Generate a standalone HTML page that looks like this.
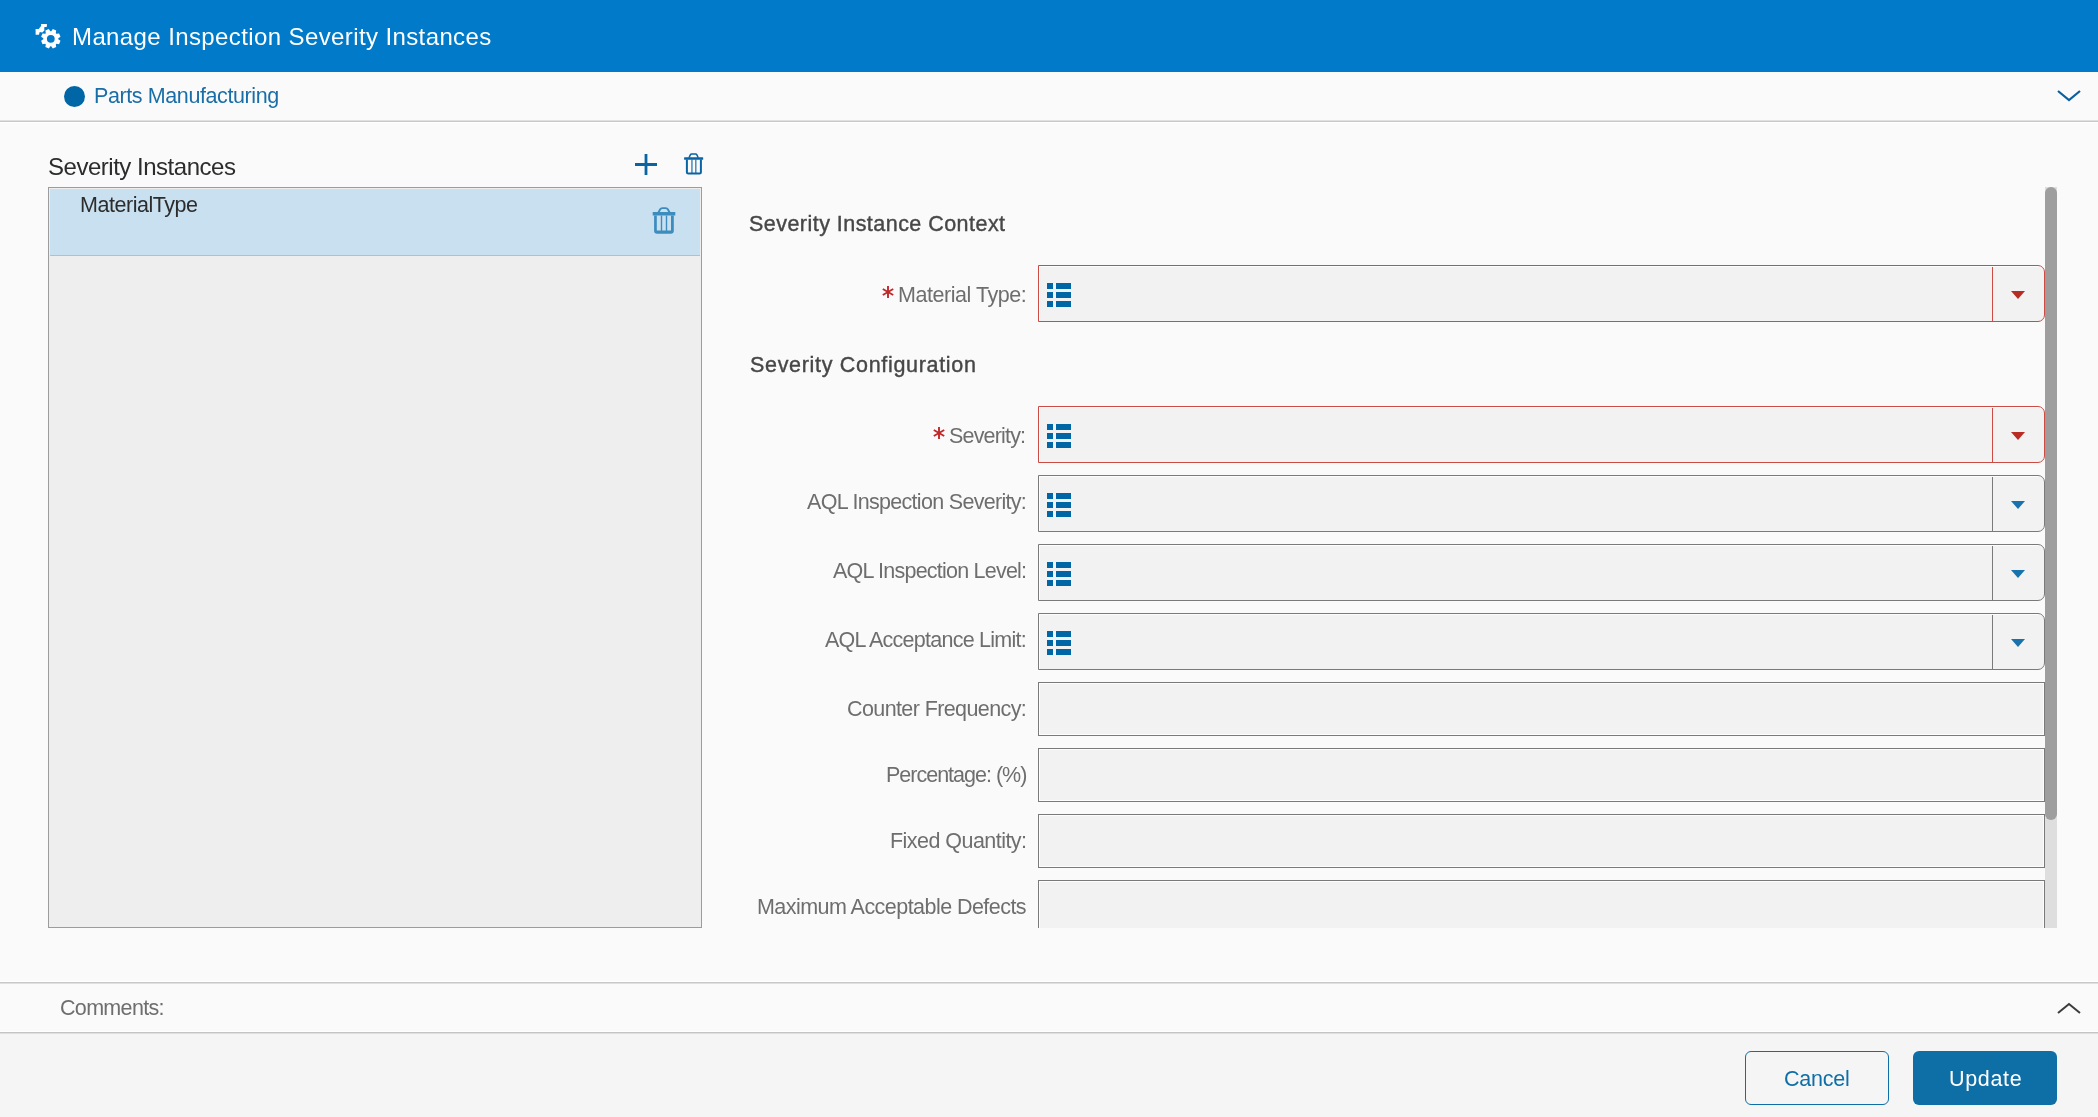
<!DOCTYPE html>
<html><head><meta charset="utf-8">
<style>
*{margin:0;padding:0;box-sizing:border-box}
html,body{width:2098px;height:1117px;overflow:hidden;background:#fafafa;font-family:"Liberation Sans",sans-serif}
.a{position:absolute}
.t{position:absolute;white-space:nowrap;line-height:1;will-change:transform}
.dd{position:absolute;left:1038px;width:1007px;height:57px;background:#f2f2f2;border:1px solid #7a7a7a;border-radius:0 7px 7px 0;box-shadow:inset 1px 1px 0 #fdfdfd}
.dd.err{border-color:#cc4b45}
.dd .dv{position:absolute;left:952.6px;top:1px;bottom:0;width:1.6px;background:#7a7a7a}
.dd.err .dv{background:#cc4b45}
.dd .ar{position:absolute;left:971.5px;top:25px;width:0;height:0;border-left:7.5px solid transparent;border-right:7.5px solid transparent;border-top:8px solid #1872ab}
.dd.err .ar{border-top-color:#b82c24}
.li{position:absolute;left:8px;top:17px}
.tx{position:absolute;left:1038px;width:1007px;height:54px;background:#f2f2f2;border:1px solid #7a7a7a;box-shadow:inset 0 0 0 1px #fdfdfd}
</style></head><body>
<div class="a" style="left:0;top:0;width:2098px;height:72px;background:#007ac9"></div>
<svg class="a" style="left:30px;top:18px" width="36" height="36" viewBox="30 18 36 36"><path fill="#fff" fill-rule="evenodd" d="M51.24 31.31 L52.82 29.11 L56.22 30.52 L55.78 33.19 L56.41 33.82 L59.08 33.38 L60.49 36.78 L58.29 38.36 L58.29 39.24 L60.49 40.82 L59.08 44.22 L56.41 43.78 L55.78 44.41 L56.22 47.08 L52.82 48.49 L51.24 46.29 L50.36 46.29 L48.78 48.49 L45.38 47.08 L45.82 44.41 L45.19 43.78 L42.52 44.22 L41.11 40.82 L43.31 39.24 L43.31 38.36 L41.11 36.78 L42.52 33.38 L45.19 33.82 L45.82 33.19 L45.38 30.52 L48.78 29.11 L50.36 31.31 Z M54.70 38.80 A3.9 3.9 0 1 0 46.90 38.80 A3.9 3.9 0 1 0 54.70 38.80 Z M41.1 24 L46.9 24 L46.9 26.7 L44.2 27.3 L44.4 30.4 L42.3 32.4 L39.7 31.9 L39 34.8 L35.6 34.8 L35.6 29.1 L38.7 29 L41.1 26.1 Z"/></svg>
<div class="a" style="left:0;top:120px;width:2098px;height:1px;background:#e0e0e0"></div>
<div class="a" style="left:0;top:121px;width:2098px;height:1px;background:#c8c8c8"></div>
<div class="a" style="left:0;top:122px;width:2098px;height:1px;background:#ffffff"></div>
<div class="a" style="left:64.2px;top:85.5px;width:21px;height:21px;border-radius:50%;background:#0066a5"></div>
<svg class="a" style="left:2054px;top:86px" width="30" height="20" viewBox="0 0 30 20"><path d="M4 5L15 14L26 5" fill="none" stroke="#0a5f9e" stroke-width="2.2"/></svg>
<svg class="a" style="left:633px;top:152px" width="26" height="26" viewBox="0 0 26 26"><path d="M13 2V23M2 12.5H24" stroke="#0a64a4" stroke-width="2.8"/></svg>
<svg class="a" style="left:684px;top:153.1px" width="20" height="23" viewBox="0 0 20 23" fill="#0a64a4"><path fill-rule="evenodd" d="M1.9 6.6H17.9V19Q17.9 21.5 15.4 21.5H4.4Q1.9 21.5 1.9 19ZM3.9 6.6H7.4V19.4H3.9ZM8.5 6.6H11.3V19.4H8.5ZM12.4 6.6H15.9V19.4H12.4Z"/><rect x="0.1" y="4.3" width="19.1" height="2.5" rx="0.6"/><path d="M5 4.8L6.3 1.9Q6.7 1.05 7.6 1.05H11.6Q12.5 1.05 12.9 1.9L14.2 4.8" fill="none" stroke="#0a64a4" stroke-width="1.5"/></svg>
<div class="a" style="left:48px;top:187px;width:654px;height:741px;background:#eeeeee;border:1px solid #9c9c9c"></div>
<div class="a" style="left:50px;top:189px;width:650px;height:67px;background:#c9e0f0;border-bottom:1px solid #a6c3d8"></div>
<svg class="a" style="left:652px;top:206px" width="24" height="28" viewBox="0 0 24 28" fill="#3d8cbe"><path fill-rule="evenodd" d="M2.1 9.4H21.8V24.8Q21.8 27.8 18.8 27.8H5.1Q2.1 27.8 2.1 24.8ZM4.8 9.4H8.8V24.4H4.8ZM10.2 9.4H13.8V24.4H10.2ZM15.2 9.4H19V24.4H15.2Z"/><rect x="0.7" y="6" width="22.6" height="3.5"/><path d="M6.4 6.5L8.2 3.3Q8.9 2.1 10.2 2.1H13.8Q15.1 2.1 15.8 3.3L17.6 6.5" fill="none" stroke="#3d8cbe" stroke-width="1.9"/></svg>
<div class="dd err" style="top:265px"><svg class="li" width="24" height="24" viewBox="0 0 24 24"><path d="M0 0h6v6h-6zM9 0h15v6h-15zM0 9h6v6h-6zM9 9h15v6h-15zM0 18h6v6h-6zM9 18h15v6h-15z" fill="#0066a5"/></svg><div class="dv"></div><div class="ar"></div></div>
<div class="dd err" style="top:406px"><svg class="li" width="24" height="24" viewBox="0 0 24 24"><path d="M0 0h6v6h-6zM9 0h15v6h-15zM0 9h6v6h-6zM9 9h15v6h-15zM0 18h6v6h-6zM9 18h15v6h-15z" fill="#0066a5"/></svg><div class="dv"></div><div class="ar"></div></div>
<div class="dd" style="top:475px"><svg class="li" width="24" height="24" viewBox="0 0 24 24"><path d="M0 0h6v6h-6zM9 0h15v6h-15zM0 9h6v6h-6zM9 9h15v6h-15zM0 18h6v6h-6zM9 18h15v6h-15z" fill="#0066a5"/></svg><div class="dv"></div><div class="ar"></div></div>
<div class="dd" style="top:544px"><svg class="li" width="24" height="24" viewBox="0 0 24 24"><path d="M0 0h6v6h-6zM9 0h15v6h-15zM0 9h6v6h-6zM9 9h15v6h-15zM0 18h6v6h-6zM9 18h15v6h-15z" fill="#0066a5"/></svg><div class="dv"></div><div class="ar"></div></div>
<div class="dd" style="top:613px"><svg class="li" width="24" height="24" viewBox="0 0 24 24"><path d="M0 0h6v6h-6zM9 0h15v6h-15zM0 9h6v6h-6zM9 9h15v6h-15zM0 18h6v6h-6zM9 18h15v6h-15z" fill="#0066a5"/></svg><div class="dv"></div><div class="ar"></div></div>
<div class="tx" style="top:682px;height:54px"></div>
<div class="tx" style="top:748px;height:54px"></div>
<div class="tx" style="top:814px;height:54px"></div>
<div class="tx" style="top:880px;height:60px"></div>
<svg class="a" style="left:880.6px;top:285px" width="14" height="14" viewBox="-7 -7 14 14"><g stroke="#c0282a" stroke-width="1.9"><path d="M0 -6V6"/><path d="M-5.2 -3L5.2 3"/><path d="M-5.2 3L5.2 -3"/></g></svg>
<svg class="a" style="left:932.4px;top:426px" width="14" height="14" viewBox="-7 -7 14 14"><g stroke="#c0282a" stroke-width="1.9"><path d="M0 -6V6"/><path d="M-5.2 -3L5.2 3"/><path d="M-5.2 3L5.2 -3"/></g></svg>
<div class="a" style="left:0;top:928px;width:2098px;height:54px;background:#fafafa"></div>
<div class="a" style="left:2045px;top:187px;width:12px;height:741px;background:#dedede"></div>
<div class="a" style="left:2045px;top:187px;width:12px;height:633px;background:#9e9e9e;border-radius:6px"></div>
<div class="a" style="left:0;top:981px;width:2098px;height:1px;background:#ffffff"></div>
<div class="a" style="left:0;top:982px;width:2098px;height:1px;background:#c8c8c8"></div>
<div class="a" style="left:0;top:983px;width:2098px;height:1px;background:#e0e0e0"></div>
<div class="a" style="left:0;top:1031px;width:2098px;height:1px;background:#ffffff"></div>
<div class="a" style="left:0;top:1032px;width:2098px;height:1px;background:#c4c4c4"></div>
<div class="a" style="left:0;top:1033px;width:2098px;height:1px;background:#e0e0e0"></div>
<svg class="a" style="left:2054px;top:996.6px" width="30" height="20" viewBox="0 0 30 20"><path d="M4 16L15 7L26 16" fill="none" stroke="#3c3c3c" stroke-width="2"/></svg>
<div class="a" style="left:0;top:1034px;width:2098px;height:83px;background:#f5f5f5"></div>
<div class="a" style="left:1745px;top:1051px;width:144px;height:54px;border:1.5px solid #0e6ea6;border-radius:6px"></div>
<div class="a" style="left:1913px;top:1051px;width:144px;height:54px;background:#0e6ea6;border-radius:6px"></div>
<div class="t" style="left:72.00px;top:25px;font-size:24px;color:#fff;letter-spacing:0.391px;font-weight:normal">Manage Inspection Severity Instances</div>
<div class="t" style="left:94.00px;top:86px;font-size:21.5px;color:#1a6ea8;letter-spacing:-0.400px;font-weight:normal">Parts Manufacturing</div>
<div class="t" style="left:48.00px;top:155px;font-size:24px;color:#2c2c2c;letter-spacing:-0.482px;font-weight:normal">Severity Instances</div>
<div class="t" style="left:80.00px;top:195px;font-size:21.5px;color:#2c2c2c;letter-spacing:-0.455px;font-weight:normal">MaterialType</div>
<div class="t" style="left:749.00px;top:214px;font-size:21.5px;color:#474747;letter-spacing:0.462px;font-weight:normal;-webkit-text-stroke:0.4px #474747">Severity Instance Context</div>
<div class="t" style="right:1072.00px;top:285px;font-size:21.5px;color:#6e6e6e;letter-spacing:-0.462px;font-weight:normal">Material Type:</div>
<div class="t" style="left:750.00px;top:355px;font-size:21.5px;color:#474747;letter-spacing:0.686px;font-weight:normal;-webkit-text-stroke:0.4px #474747">Severity Configuration</div>
<div class="t" style="right:1073.00px;top:426px;font-size:21.5px;color:#6e6e6e;letter-spacing:-0.825px;font-weight:normal">Severity:</div>
<div class="t" style="right:1072.00px;top:492px;font-size:21.5px;color:#6e6e6e;letter-spacing:-0.696px;font-weight:normal">AQL Inspection Severity:</div>
<div class="t" style="right:1072.00px;top:561px;font-size:21.5px;color:#6e6e6e;letter-spacing:-0.775px;font-weight:normal">AQL Inspection Level:</div>
<div class="t" style="right:1072.00px;top:630px;font-size:21.5px;color:#6e6e6e;letter-spacing:-0.750px;font-weight:normal">AQL Acceptance Limit:</div>
<div class="t" style="right:1072.00px;top:699px;font-size:21.5px;color:#6e6e6e;letter-spacing:-0.600px;font-weight:normal">Counter Frequency:</div>
<div class="t" style="right:1072.00px;top:765px;font-size:21.5px;color:#6e6e6e;letter-spacing:-1.000px;font-weight:normal">Percentage: (%)</div>
<div class="t" style="right:1072.00px;top:831px;font-size:21.5px;color:#6e6e6e;letter-spacing:-0.543px;font-weight:normal">Fixed Quantity:</div>
<div class="t" style="right:1072.00px;top:897px;font-size:21.5px;color:#6e6e6e;letter-spacing:-0.544px;font-weight:normal">Maximum Acceptable Defects</div>
<div class="t" style="left:60.00px;top:998px;font-size:21.5px;color:#6e6e6e;letter-spacing:-0.675px;font-weight:normal">Comments:</div>
<div class="t" style="left:1784.00px;top:1069px;font-size:21.5px;color:#0e6ea6;letter-spacing:-0.240px;font-weight:normal">Cancel</div>
<div class="t" style="left:1949.00px;top:1069px;font-size:21.5px;color:#fff;letter-spacing:0.660px;font-weight:normal">Update</div>
</body></html>
